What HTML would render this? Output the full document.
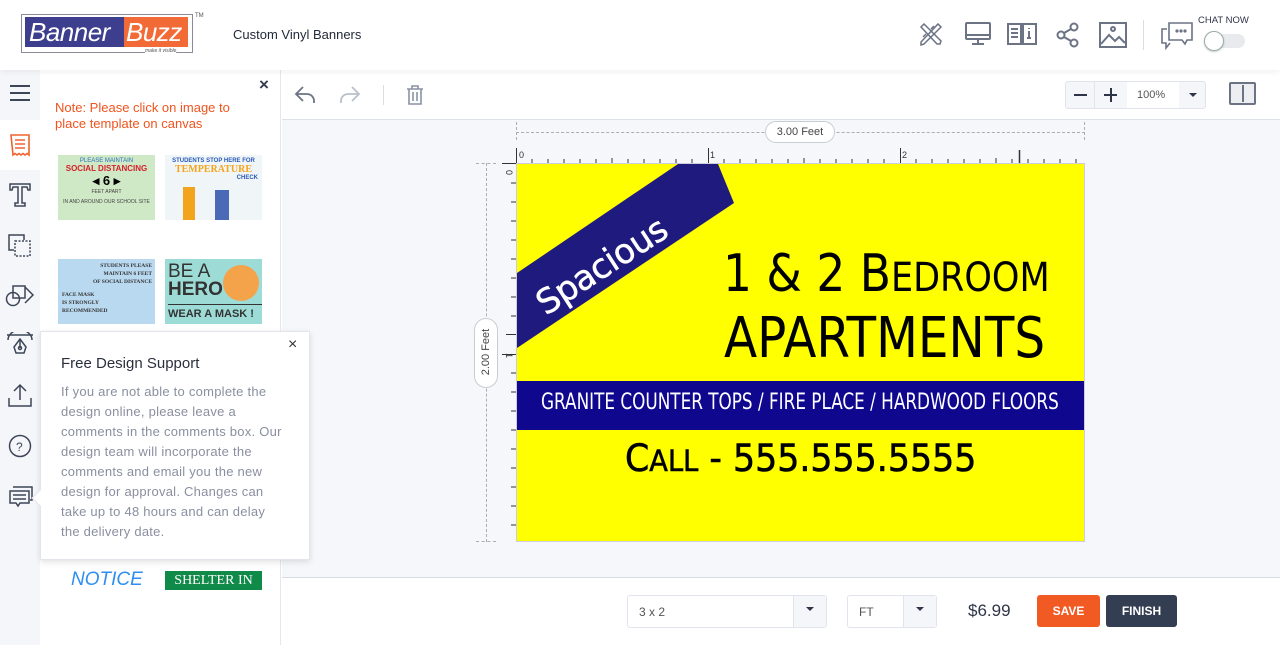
<!DOCTYPE html>
<html><head><meta charset="utf-8"><style>
*{margin:0;padding:0;box-sizing:border-box}
body{width:1280px;height:645px;overflow:hidden;font-family:"Liberation Sans",sans-serif;background:#fff;position:relative}
.abs{position:absolute}
.ico{position:absolute;fill:none}
</style></head><body>
<!-- header -->
<div class="abs" style="left:0;top:0;width:1280px;height:70px;background:#fff;box-shadow:0 2px 6px rgba(0,0,0,.06);z-index:3">
 <div class="abs" style="left:21px;top:14px;width:172px;height:39px;border:1px solid #8a8a9a"></div>
 <div class="abs" style="left:25px;top:17px;width:99px;height:30px;background:#3d3f8e;color:#fff;font-size:26px;font-style:italic;line-height:30px;padding-left:4px;letter-spacing:-0.5px">Banner</div>
 <div class="abs" style="left:124px;top:17px;width:64px;height:30px;background:#f26a35;color:#fff;font-size:26px;font-style:italic;line-height:30px;padding-left:2px;letter-spacing:-0.5px">Buzz</div>
 <div class="abs" style="left:145px;top:48px;font-size:5px;color:#555;background:#fff;font-style:italic">make it visible</div>
 <div class="abs" style="left:195px;top:13px;font-size:6px;color:#555">TM</div>
 <div class="abs" style="left:233px;top:27px;font-size:13px;color:#222a3a">Custom Vinyl Banners</div>
 <svg class="ico" style="left:918px;top:21px;stroke:#6b7385;stroke-width:1.5" width="26" height="26" viewBox="0 0 26 26"><path d="M3 6l3-3 17 17-1 3-3 0zM20 3l3 3-17 17-3 1 0-3zM8 13l-3 3M13 8l3-3"/></svg>
 <svg class="ico" style="left:965px;top:22px;stroke:#6b7385;stroke-width:2" width="26" height="24" viewBox="0 0 26 24"><rect x="1" y="1" width="24" height="16" rx="1"/><path d="M1 13h24M13 17v4M7 22h12"/></svg>
 <svg class="ico" style="left:1007px;top:22px;stroke:#6b7385;stroke-width:2" width="30" height="24" viewBox="0 0 30 24"><path d="M1 2h13v20H1zM16 2h13v20H16zM4 7h7M4 11h7M4 15h7M22 9v7M22 6v1M20 16h4"/></svg>
 <svg class="ico" style="left:1056px;top:22px;stroke:#6b7385;stroke-width:2" width="24" height="26" viewBox="0 0 24 26"><circle cx="18" cy="5" r="3.5"/><circle cx="5" cy="13" r="3.5"/><circle cx="18" cy="21" r="3.5"/><path d="M8 11l7-4M8 15l7 4"/></svg>
 <svg class="ico" style="left:1099px;top:22px;stroke:#6b7385;stroke-width:2" width="28" height="26" viewBox="0 0 28 26"><rect x="1" y="1" width="26" height="24"/><path d="M2 22l8-9 6 6 4-4 6 6"/><circle cx="14" cy="7" r="2"/></svg>
 <div class="abs" style="left:1143px;top:20px;width:1px;height:30px;background:#ddd"></div>
 <svg class="ico" style="left:1160px;top:20px;stroke:#6b7385;stroke-width:1.6" width="34" height="30" viewBox="0 0 34 30"><path d="M9 3h23v17h-5l-2 4-3-4H9z"/><path d="M7 9H2v14h4v5l4-5"/><circle cx="17" cy="11" r=".8"/><circle cx="21" cy="11" r=".8"/><circle cx="25" cy="11" r=".8"/></svg>
 <div class="abs" style="left:1198px;top:15px;font-size:9.5px;color:#2e3548">CHAT NOW</div>
 <div class="abs" style="left:1204px;top:34px;width:41px;height:14px;border-radius:7px;background:#e9eaee"></div>
 <div class="abs" style="left:1204px;top:31px;width:20px;height:20px;border-radius:50%;background:#fff;border:1px solid #9aa;box-shadow:0 1px 2px rgba(0,0,0,.2)"></div>
</div>
<!-- left icon bar -->
<div class="abs" style="left:0;top:70px;width:40px;height:575px;background:#f5f6fa"></div>
<div class="abs" style="left:0;top:120px;width:40px;height:50px;background:#fff"></div>
<svg class="ico" style="left:9px;top:84px;stroke:#3d4658;stroke-width:2" width="22" height="18" viewBox="0 0 22 18"><path d="M1 2h20M1 9h20M1 16h20"/></svg>
<svg class="ico" style="left:10px;top:134px;stroke:#f0622e;stroke-width:1.6" width="20" height="24" viewBox="0 0 20 24"><path d="M1 1h18v20l-2-1.5-2 1.5-2-1.5-2 1.5-2-1.5-2 1.5-2-1.5-2 1.5z"/><path d="M5 6h10M5 10h10M5 14h10"/></svg>
<svg class="ico" style="left:9px;top:183px;stroke:#3d4658;stroke-width:1.5" width="22" height="24" viewBox="0 0 22 24"><path d="M1 1h20v6h-2l-1-3h-5v16h3v3H6v-3h3V4H4L3 7H1z"/></svg>
<svg class="ico" style="left:7px;top:233px;stroke:#3d4658;stroke-width:1.5" width="26" height="26" viewBox="0 0 26 26"><path d="M17 7V2H2v15h5"/><rect x="8" y="8" width="15" height="15" stroke-dasharray="2 1.5"/></svg>
<svg class="ico" style="left:5px;top:283px;stroke:#3d4658;stroke-width:1.5" width="30" height="24" viewBox="0 0 30 24"><circle cx="8" cy="16" r="6.5"/><rect x="8" y="3" width="12" height="12"/><path d="M20 4l8 8-8 8"/></svg>
<svg class="ico" style="left:6px;top:332px;stroke:#3d4658;stroke-width:1.5" width="28" height="26" viewBox="0 0 28 26"><path d="M2 8a12 10 0 0124 0M1 3h26"/><path d="M14 7l6 8-2 6h-8l-2-6z"/><circle cx="14" cy="16" r="1.5"/><path d="M14 7v9"/></svg>
<svg class="ico" style="left:8px;top:383px;stroke:#3d4658;stroke-width:1.5" width="24" height="24" viewBox="0 0 24 24"><path d="M12 17V2M6 8l6-6 6 6M1 15v8h22v-8"/></svg>
<svg class="ico" style="left:8px;top:434px;stroke:#3d4658;stroke-width:1.5" width="24" height="24" viewBox="0 0 24 24"><circle cx="12" cy="12" r="10.5"/><text x="8" y="17" font-size="12" fill="#3d4658" stroke="none" font-family="Liberation Sans">?</text></svg>
<svg class="ico" style="left:9px;top:484px;stroke:#3d4658;stroke-width:1.5" width="24" height="24" viewBox="0 0 24 24"><path d="M4 3h19v13h-2"/><path d="M1 7h19v12h-9l-2 3-2-3H1z"/><path d="M4 11h13M4 15h13"/></svg>
<!-- panel -->
<div class="abs" style="left:40px;top:70px;width:241px;height:575px;background:#fff;border-right:1px solid #e5e7ee"></div>
<div class="abs" style="left:259px;top:75px;font-size:17px;color:#333b4f;font-weight:bold">×</div>
<div class="abs" style="left:55px;top:100px;font-size:13px;line-height:16px;color:#f0541e">Note: Please click on image to<br>place template on canvas</div>
<div class="abs" style="left:58px;top:155px;width:97px;height:65px;background:#cfe9c6;font-size:6px;text-align:center;color:#444">
 <div style="color:#2a6ec0;margin-top:3px">PLEASE MAINTAIN</div><div style="color:#d4202a;font-size:8px;font-weight:bold">SOCIAL DISTANCING</div><div style="font-size:13px;font-weight:bold;color:#000">◂ 6 ▸</div><div style="font-size:5px">FEET APART</div><div style="font-size:5px;margin-top:4px">IN AND AROUND OUR SCHOOL SITE</div></div>
<div class="abs" style="left:165px;top:155px;width:97px;height:65px;background:#f0f5f8;font-size:6px;color:#2a5bb8;font-weight:bold;text-align:center">
 <div style="margin-top:3px">STUDENTS STOP HERE FOR</div><div style="color:#f6a41a;font-size:10px;font-family:'Liberation Serif',serif">TEMPERATURE</div><div style="text-align:right;padding-right:4px">CHECK</div>
 <div class="abs" style="left:18px;top:32px;width:12px;height:33px;background:#f2a51c"></div><div class="abs" style="left:50px;top:35px;width:14px;height:30px;background:#4a6ab8"></div></div>
<div class="abs" style="left:58px;top:259px;width:97px;height:65px;background:#b9d9f0;font-family:'Liberation Serif',serif;font-size:5.5px;text-align:right;padding-right:3px;font-weight:bold;color:#333;line-height:8px"><div style="margin-top:3px">STUDENTS PLEASE<br>MAINTAIN 6 FEET<br>OF SOCIAL DISTANCE</div><div style="text-align:left;padding-left:4px;margin-top:5px">FACE MASK<br>IS STRONGLY<br>RECOMMENDED</div></div>
<div class="abs" style="left:165px;top:259px;width:97px;height:65px;background:#9ddcd6;font-size:19px;color:#333;line-height:18px;padding:4px 0 0 3px;font-weight:bold"><span style="font-weight:normal">BE A</span><br>HERO<div style="font-size:11px;margin-top:5px;border-top:1px solid #333">WEAR A MASK !</div>
 <div class="abs" style="left:58px;top:6px;width:36px;height:36px;border-radius:50%;background:#f5a34a"></div></div>
<div class="abs" style="left:71px;top:569px;font-size:19px;font-style:italic;color:#2f8ff0">NOTICE</div>
<div class="abs" style="left:165px;top:571px;width:97px;height:19px;background:#0f8a48;color:#fff;font-family:'Liberation Serif',serif;font-size:14px;text-align:center;line-height:19px;overflow:hidden">SHELTER IN</div>
<!-- toolbar -->
<div class="abs" style="left:282px;top:70px;width:998px;height:50px;background:#fff;border-bottom:1px solid #dde1ea"></div>
<svg class="ico" style="left:294px;top:85px;stroke:#6b7385;stroke-width:1.8" width="22" height="20" viewBox="0 0 22 20"><path d="M9 2L2 9l7 7M2 9h11a7 7 0 017 7v2"/></svg>
<svg class="ico" style="left:339px;top:85px;stroke:#b9c0cc;stroke-width:1.8" width="22" height="20" viewBox="0 0 22 20"><path d="M13 2l7 7-7 7M20 9H9a7 7 0 00-7 7v2"/></svg>
<div class="abs" style="left:383px;top:85px;width:1px;height:20px;background:#ddd"></div>
<svg class="ico" style="left:406px;top:85px;stroke:#8a92a3;stroke-width:1.6" width="18" height="20" viewBox="0 0 18 20"><path d="M1 4h16M6 4V1h6v3M3 4v15h12V4M7 7v9M11 7v9"/></svg>
<div class="abs" style="left:1065px;top:81px;width:141px;height:28px;border:1px solid #e1e4ec;border-radius:3px;background:#f5f6fa"></div>
<div class="abs" style="left:1074px;top:94px;width:13px;height:2px;background:#2e3548"></div>
<div class="abs" style="left:1104px;top:94px;width:13px;height:2px;background:#2e3548"></div><div class="abs" style="left:1110px;top:88px;width:2px;height:14px;background:#2e3548"></div>
<div class="abs" style="left:1094px;top:82px;width:1px;height:26px;background:#e1e4ec"></div>
<div class="abs" style="left:1127px;top:82px;width:52px;height:26px;background:#fff;font-size:11px;color:#555;line-height:26px;padding-left:10px">100%</div>
<div class="abs" style="left:1189px;top:93px;border:4px solid transparent;border-top:4px solid #2e3548"></div>
<div class="abs" style="left:1229px;top:82px;width:27px;height:23px;border:2px solid #6b7385;border-radius:2px;background:#eceef2"></div><div class="abs" style="left:1242px;top:85px;width:2px;height:17px;background:#6b7385"></div>
<!-- canvas area -->
<div class="abs" style="left:282px;top:120px;width:998px;height:458px;background:#f5f7fb;border-bottom:1px solid #d9dce3"></div>
<div class="abs" style="left:516px;top:132px;width:569px;border-top:1px dashed #a8adb8"></div>
<div class="abs" style="left:516px;top:122px;height:18px;border-left:1px dashed #a8adb8"></div>
<div class="abs" style="left:1084px;top:122px;height:18px;border-left:1px dashed #a8adb8"></div>
<div class="abs" style="left:765px;top:121px;width:70px;height:22px;border:1px solid #c8ccd4;border-radius:11px;background:#fff;font-size:11px;color:#444;text-align:center;line-height:20px">3.00 Feet</div>
<div class="abs" style="left:486px;top:163px;height:379px;border-left:1px dashed #a8adb8"></div>
<div class="abs" style="left:476px;top:163px;width:20px;border-top:1px dashed #a8adb8"></div>
<div class="abs" style="left:476px;top:541px;width:20px;border-top:1px dashed #a8adb8"></div>
<div class="abs" style="left:474px;top:318px;width:24px;height:70px;border:1px solid #c8ccd4;border-radius:12px;background:#fff"></div>
<div class="abs" style="left:456px;top:346px;width:60px;font-size:11px;color:#444;text-align:center;transform:rotate(-90deg)">2.00 Feet</div>
<!-- rulers -->
<svg class="abs" style="left:502px;top:148px" width="583" height="394">
 <g stroke="#333" stroke-width="1">
 <path d="M14.5 0v15M206.5 0v15M398.5 0v15"/>
 <path d="M30 11v4M46 11v4M62 11v4M78 11v4M94 11v4M110 10v5M126 11v4M142 11v4M158 11v4M174 11v4M190 11v4M222 11v4M238 11v4M254 11v4M270 11v4M286 11v4M302 10v5M318 11v4M334 11v4M350 11v4M366 11v4M382 11v4M414 11v4M430 11v4M446 11v4M462 11v4M478 11v4M494 10v5M510 11v4M526 11v4M542 11v4M558 11v4M574 11v4"/>
 <path d="M517.5 2v13" stroke-width="1.5"/>
 <path d="M0 15.5h14M4 186.5h10M0 206.5h14M9 35h5M9 54h5M9 73h5M9 92h5M9 111h5M9 130h5M9 149h5M9 168h5M9 225h5M9 244h5M9 263h5M9 282h5M9 301h5M9 320h5M9 339h5M9 358h5M9 377h5"/>
 </g>
 <text x="17" y="10" font-size="9" fill="#333" font-family="Liberation Sans">0</text>
 <text x="208" y="10" font-size="9" fill="#333" font-family="Liberation Sans">1</text>
 <text x="400" y="10" font-size="9" fill="#333" font-family="Liberation Sans">2</text>
 <text x="4" y="22" font-size="9" fill="#333" font-family="Liberation Sans" transform="rotate(90 4 22)">0</text>
 <text x="4" y="205" font-size="9" fill="#333" font-family="Liberation Sans" transform="rotate(90 4 205)">1</text>
</svg>
<!-- banner -->
<div class="abs" style="left:516px;top:163px;width:569px;height:379px;background:#ffff00;overflow:hidden;border:1px solid #ccd">
 <svg class="abs" style="left:0;top:0" width="569" height="379"><polygon points="161,0 201,0 217,39 0,184 0,109" fill="#1f1a7e"/></svg>
 <div class="abs" style="left:12px;top:126px;font-size:34px;color:#fff;font-family:'DejaVu Sans',sans-serif;transform:rotate(-33deg);transform-origin:left top;white-space:nowrap;letter-spacing:-0.5px;-webkit-text-stroke:.5px #fff">Spacious</div>
 <div class="abs" style="left:0;top:217px;width:569px;height:49px;background:#10078f"></div>
 <div class="abs" style="left:24px;top:226px;font-size:22px;color:#fff;white-space:nowrap;transform:scaleX(.765);transform-origin:left;font-family:'DejaVu Sans',sans-serif">GRANITE COUNTER TOPS / FIRE PLACE / HARDWOOD FLOORS</div>
 <div class="abs" style="left:206px;top:80px;font-size:52px;color:#000;white-space:nowrap;transform:scaleX(.875);transform-origin:left;line-height:60px;font-family:'DejaVu Sans',sans-serif">1 &amp; 2 B<span style="font-size:40px">EDROOM</span></div>
 <div class="abs" style="left:207px;top:143px;font-size:56px;color:#000;white-space:nowrap;transform:scaleX(.865);transform-origin:left;line-height:64px;font-family:'DejaVu Sans',sans-serif">APARTMENTS</div>
 <div class="abs" style="left:108px;top:273px;font-size:37px;color:#000;white-space:nowrap;transform:scaleX(.94);transform-origin:left;font-family:'DejaVu Sans',sans-serif;line-height:44px;-webkit-text-stroke:.6px #000">C<span style="font-size:29px">ALL</span> - 555.555.5555</div>
</div>
<!-- popup -->
<div class="abs" style="left:40px;top:331px;width:270px;height:229px;background:#fff;border:1px solid #e3e4ec;box-shadow:0 2px 6px rgba(0,0,0,.12);z-index:5">
 <div class="abs" style="left:-7px;top:160px;width:12px;height:12px;background:#fff;transform:rotate(45deg);border-left:1px solid #e3e4ec;border-bottom:1px solid #e3e4ec"></div>
 <div class="abs" style="left:247px;top:4px;font-size:16px;color:#333">×</div>
 <div class="abs" style="left:20px;top:23px;font-size:15px;color:#2a2f3c">Free Design Support</div>
 <div class="abs" style="left:20px;top:50px;width:240px;font-size:13px;line-height:20px;color:#8a8fa0;letter-spacing:.25px">If you are not able to complete the<br>design online, please leave a<br>comments in the comments box. Our<br>design team will incorporate the<br>comments and email you the new<br>design for approval. Changes can<br>take up to 48 hours and can delay<br>the delivery date.</div>
</div>
<!-- bottom bar -->
<div class="abs" style="left:627px;top:595px;width:200px;height:33px;border:1px solid #e1e4ec;border-radius:3px"></div>
<div class="abs" style="left:639px;top:605px;font-size:12px;color:#555">3 x 2</div>
<div class="abs" style="left:793px;top:596px;width:33px;height:31px;background:#f5f6fa;border-left:1px solid #e1e4ec"></div>
<div class="abs" style="left:806px;top:607px;border:4px solid transparent;border-top:4px solid #2e3548"></div>
<div class="abs" style="left:847px;top:595px;width:90px;height:33px;border:1px solid #e1e4ec;border-radius:3px"></div>
<div class="abs" style="left:859px;top:605px;font-size:12px;color:#555">FT</div>
<div class="abs" style="left:903px;top:596px;width:33px;height:31px;background:#f5f6fa;border-left:1px solid #e1e4ec"></div>
<div class="abs" style="left:916px;top:607px;border:4px solid transparent;border-top:4px solid #2e3548"></div>
<div class="abs" style="left:968px;top:601px;font-size:17px;color:#2e3548">$6.99</div>
<div class="abs" style="left:1037px;top:595px;width:63px;height:32px;background:#f25a24;border-radius:3px;color:#fff;font-size:12px;font-weight:bold;text-align:center;line-height:32px">SAVE</div>
<div class="abs" style="left:1106px;top:595px;width:71px;height:32px;background:#333e52;border-radius:3px;color:#fff;font-size:12px;font-weight:bold;text-align:center;line-height:32px">FINISH</div>
</body></html>
